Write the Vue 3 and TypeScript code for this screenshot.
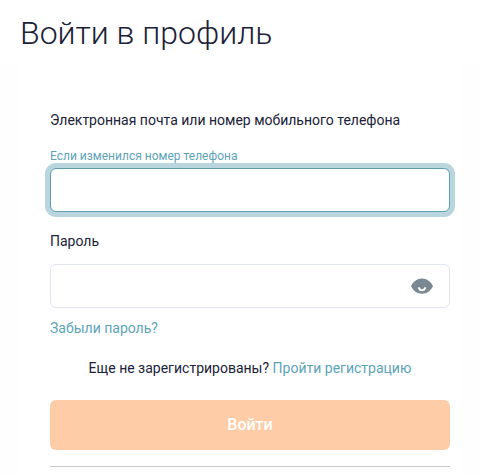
<script setup lang="ts">
const title = 'Войти в профиль'
</script>

<template>
  <main class="page">
    <h1 class="title">{{ title }}</h1>
    <section class="lower">
      <form class="card" @submit.prevent>
        <div class="label">Электронная почта или номер мобильного телефона</div>
        <a class="hint">Если изменился номер телефона</a>
        <input class="field focus" type="text" />
        <div class="label pass">Пароль</div>
        <div class="wrap">
          <input class="field" type="password" />
          <svg class="eye" width="24" height="24" viewBox="0 0 24 24">
            <path fill="#7a8893" d="M12 4.600C7 4.600 3.200 7.800 1 12.300c2.200 4.400 6 7.500 11 7.500s8.800-3.100 11-7.500C20.800 7.800 17 4.600 12 4.600z" />
            <path fill="none" stroke="#fff" stroke-width="2.100" stroke-linecap="round" d="M9 14.200c.7 1.400 1.700 2.100 3 2.100s2.300-.7 3-2.100" />
          </svg>
        </div>
        <a class="forgot">Забыли пароль?</a>
        <p class="reg">Еще не зарегистрированы? <a>Пройти регистрацию</a></p>
        <button class="submit" type="submit">Войти</button>
        <hr class="rule" />
      </form>
    </section>
  </main>
</template>

<style>
html, body { margin: 0; background: #fff; }
</style>

<style scoped>
.page {
  display: flex;
  flex-direction: column;
  height: 475px;
  overflow: hidden;
  font-family: Roboto, sans-serif;
  color: #1a2138;
  background: #fff;
}
.title {
  margin: 0;
  padding: 13px 20px 12px;
  font-size: 32px;
  line-height: 40px;
  font-weight: 300;
}
.lower {
  flex: 1;
  padding: 0 20px;
  background: #fefefe;
}
.card {
  display: flex;
  flex-direction: column;
  height: 100%;
  box-sizing: border-box;
  padding: 46px 10px 0 30px;
  background: #fff;
}
.label { font-size: 14px; line-height: 18px; }
.hint {
  margin-top: 19px;
  font-size: 12px;
  line-height: 16px;
  color: #5da3b8;
}
.field {
  display: block;
  box-sizing: border-box;
  width: 400px;
  height: 44px;
  border: 1px solid #e1e5ee;
  border-radius: 6px;
  background: #fff;
  outline: none;
}
.focus {
  margin-top: 4px;
  border-color: #5c9eb0;
  box-shadow: 0 0 0 5px #b9d5dd;
}
.pass { margin-top: 20px; }
.wrap { position: relative; margin-top: 14px; }
.eye { position: absolute; right: 16px; top: 10px; }
.forgot {
  margin-top: 11px;
  font-size: 14px;
  line-height: 18px;
  color: #5da3b8;
}
.reg {
  margin: 22px 0 0;
  font-size: 14px;
  line-height: 18px;
  text-align: center;
}
.reg a { color: #5da3b8; }
.submit {
  margin-top: 23px;
  flex: none;
  width: 400px;
  height: 50px;
  padding: 0 0 2px;
  border: 0;
  border-radius: 6px;
  background: #fecca6;
  color: #fff;
  font: 500 16px Roboto, sans-serif;
}
.rule {
  width: 400px;
  margin: 16px 0 0;
  border: 0;
  border-top: 1px solid #c6c9cf;
}
</style>
